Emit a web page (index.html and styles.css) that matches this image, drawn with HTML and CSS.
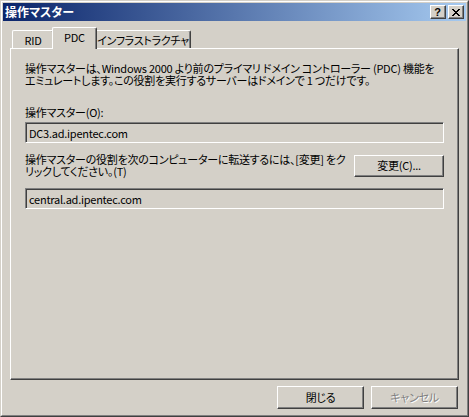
FILE: index.html
```html
<!doctype html>
<html>
    <head>
        <meta charset="utf-8">
        <link rel="stylesheet" href="styles.css">
    </head>
    <body>
        <div class="window">
            <div class="frame">
                <div class="titlebar">
                    <span class="title">操作マスター</span>
                    <div class="capbtn help">?</div>
                    <div class="capbtn">
                        <svg width="8" height="7" viewBox="0 0 8 7"><path d="M0 0h2v1h1v1h2V1h1V0h2v1H7v1H6v1H5v1h1v1h1v1h1v1H6V6H5V5H3v1H2v1H0V6h1V5h1V4h1V3H2V2H1V1H0z" fill="#000"/></svg>
                    </div>
                </div>
                <div class="content">
                    <div class="tabs">
                        <div class="tab rid">RID</div>
                        <div class="tab pdc selected">PDC</div>
                        <div class="tab infra">インフラストラクチャ</div>
                    </div>
                    <div class="panel">
                        <p class="desc">操作マスターは、Windows 2000 より前のプライマリ ドメイン コントローラー (PDC) 機能を<br>エミュレートします。この役割を実行するサーバーはドメインで 1 つだけです。</p>
                        <div class="label">操作マスター(O):</div>
                        <div class="field">DC3.ad.ipentec.com</div>
                        <div class="row">
                            <p class="rowtext">操作マスターの役割を次のコンピューターに転送するには、[変更] をク<br>リックしてください。(T)</p>
                            <div class="btn change">変更(C)...</div>
                        </div>
                        <div class="field second">central.ad.ipentec.com</div>
                    </div>
                    <div class="footer">
                        <div class="btn">閉じる</div>
                        <div class="btn disabled">キャンセル</div>
                    </div>
                </div>
            </div>
        </div>
    </body>
</html>
```
FILE: styles.css
```css
html, body
{
    margin: 0;
}
body
{
    background: #d4d0c8;
    font-family: "Noto Sans CJK JP", sans-serif;
    font-size: 11px;
    letter-spacing: -0.25px;
    font-feature-settings: "palt";
    color: #000;
}
.window
{
    width: 469px;
    height: 417px;
    box-sizing: border-box;
    border: 1px solid;
    border-color: #d4d0c8 #404040 #404040 #d4d0c8;
}
.frame
{
    height: 100%;
    box-sizing: border-box;
    border: 1px solid;
    border-color: #fff #808080 #808080 #fff;
    padding: 1px;
    display: flex;
    flex-direction: column;
}
.titlebar
{
    height: 18px;
    flex: none;
    display: flex;
    align-items: center;
    padding: 0 2px;
    background: linear-gradient(to right, #0a246a, #a6caf0);
}
.title
{
    flex: 1;
    color: #fff;
    font-weight: bold;
    font-size: 12px;
    letter-spacing: 0;
    line-height: 18px;
}
.capbtn
{
    width: 16px;
    height: 14px;
    box-sizing: border-box;
    margin-left: 2px;
    background: #d4d0c8;
    border: 1px solid;
    border-color: #fff #404040 #404040 #fff;
    box-shadow: inset -1px -1px #808080;
    display: flex;
    align-items: center;
    justify-content: center;
}
.capbtn svg
{
    display: block;
    margin-left: -1px;
}
.help
{
    font-family: "Liberation Sans", sans-serif;
    font-weight: bold;
    font-size: 11px;
    letter-spacing: 0;
    line-height: 12px;
    padding-right: 1px;
}
.content
{
    flex: 1;
    display: flex;
    flex-direction: column;
    padding: 6px 7px 0;
}
.tabs
{
    height: 21px;
    display: flex;
    align-items: flex-end;
    padding-left: 2px;
}
.tab
{
    height: 18px;
    box-sizing: border-box;
    border: 1px solid;
    border-bottom: none;
    border-color: #fff #404040 #fff #fff;
    border-radius: 2px 2px 0 0;
    box-shadow: inset -1px 0 #808080;
    padding-top: 2px;
    line-height: 14px;
    text-align: center;
    white-space: nowrap;
    background: #d4d0c8;
}
.rid
{
    width: 42px;
}
.pdc
{
    width: 41px;
}
.infra
{
    width: 96px;
}
.tab.selected
{
    position: relative;
    z-index: 2;
    width: 45px;
    height: 22px;
    margin: 0 -2px -1px;
}
.panel
{
    flex: 1;
    border: 1px solid;
    border-color: #fff #404040 #404040 #fff;
    box-shadow: inset -1px -1px #808080;
    padding: 13px 14px 0;
}
.desc
{
    margin: 0;
    line-height: 12px;
    white-space: nowrap;
}
.label
{
    margin-top: 20px;
    line-height: 12px;
}
.field
{
    margin-top: 4px;
    height: 21px;
    box-sizing: border-box;
    border: 1px solid;
    border-color: #808080 #fff #fff #808080;
    box-shadow: inset 1px 1px #404040;
    padding: 3px 0 0 3px;
    line-height: 14px;
}
.field.second
{
    margin-top: 11px;
}
.row
{
    margin-top: 10px;
    display: flex;
    justify-content: space-between;
}
.rowtext
{
    margin: 0;
    line-height: 12px;
    white-space: nowrap;
}
.btn
{
    width: 87px;
    height: 23px;
    box-sizing: border-box;
    border: 1px solid;
    border-color: #fff #404040 #404040 #fff;
    box-shadow: inset -1px -1px #808080;
    text-align: center;
    line-height: 20px;
}
.btn.change
{
    width: 90px;
    height: 22px;
    margin-top: 2px;
    line-height: 19px;
}
.footer
{
    height: 34px;
    flex: none;
    box-sizing: border-box;
    padding: 6px 1px 0 0;
    display: flex;
    justify-content: flex-end;
    gap: 7px;
}
.disabled
{
    color: #808080;
    text-shadow: 1px 1px #fff;
}
```
